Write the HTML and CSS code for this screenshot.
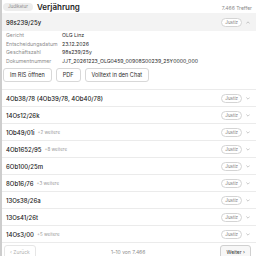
FILE: index.html
```html
<!DOCTYPE html>
<html lang="de">
<head>
<meta charset="utf-8">
<link rel="stylesheet" href="styles.css">
</head>
<body>
<div class="panel">
  <div class="topbar">
    <span class="tag">Judikatur</span>
    <span class="heading">Verjährung</span>
    <span class="count">7.466 Treffer</span>
  </div>

  <div class="item open">
    <div class="row head">
      <span class="title">98s239/25y</span>
      <span class="pill">Justiz</span>
      <svg class="chev" viewBox="0 0 6 4"><polyline points="0.5,3.5 3,1 5.5,3.5"/></svg>
    </div>
    <div class="details">
      <span class="lbl">Gericht</span><span class="val">OLG Linz</span>
      <span class="lbl">Entscheidungsdatum</span><span class="val">23.12.2026</span>
      <span class="lbl">Geschäftszahl</span><span class="val">98s239/25y</span>
      <span class="lbl">Dokumentnummer</span><span class="val">JJT_20261223_OLG0459_00908S00239_25Y0000_000</span>
    </div>
    <div class="actions">
      <span class="btn">Im RIS öffnen</span>
      <span class="btn">PDF</span>
      <span class="btn">Volltext in den Chat</span>
    </div>
  </div>

  <div class="row"><span class="title">4Ob38/78 (4Ob39/78, 4Ob40/78)</span><span class="pill">Justiz</span><svg class="chev" viewBox="0 0 6 4"><polyline points="0.5,0.5 3,3 5.5,0.5"/></svg></div>
  <div class="row"><span class="title">14Os12/26k</span><span class="pill">Justiz</span><svg class="chev" viewBox="0 0 6 4"><polyline points="0.5,0.5 3,3 5.5,0.5"/></svg></div>
  <div class="row"><span class="title">1Ob49/01i</span><span class="more">+2 weitere</span><span class="pill">Justiz</span><svg class="chev" viewBox="0 0 6 4"><polyline points="0.5,0.5 3,3 5.5,0.5"/></svg></div>
  <div class="row"><span class="title">4Ob1652/95</span><span class="more">+8 weitere</span><span class="pill">Justiz</span><svg class="chev" viewBox="0 0 6 4"><polyline points="0.5,0.5 3,3 5.5,0.5"/></svg></div>
  <div class="row"><span class="title">6Ob100/25m</span><span class="pill">Justiz</span><svg class="chev" viewBox="0 0 6 4"><polyline points="0.5,0.5 3,3 5.5,0.5"/></svg></div>
  <div class="row"><span class="title">8Ob16/76</span><span class="more">+3 weitere</span><span class="pill">Justiz</span><svg class="chev" viewBox="0 0 6 4"><polyline points="0.5,0.5 3,3 5.5,0.5"/></svg></div>
  <div class="row"><span class="title">13Os38/26a</span><span class="pill">Justiz</span><svg class="chev" viewBox="0 0 6 4"><polyline points="0.5,0.5 3,3 5.5,0.5"/></svg></div>
  <div class="row"><span class="title">13Os41/26t</span><span class="pill">Justiz</span><svg class="chev" viewBox="0 0 6 4"><polyline points="0.5,0.5 3,3 5.5,0.5"/></svg></div>
  <div class="row"><span class="title">14Os3/00</span><span class="more">+5 weitere</span><span class="pill">Justiz</span><svg class="chev" viewBox="0 0 6 4"><polyline points="0.5,0.5 3,3 5.5,0.5"/></svg></div>

  <div class="pager">
    <span class="pbtn disabled">‹ Zurück</span>
    <span class="pinfo">1–10 von 7.466</span>
    <span class="pbtn">Weiter ›</span>
  </div>
</div>
</body>
</html>
```

FILE: styles.css
```css
html, body {
  margin: 0;
  padding: 0;
  background: #ffffff;
}
body {
  font-family: "Inter", "Liberation Sans", sans-serif;
  color: #222;
  width: 256px;
  height: 256px;
  overflow: hidden;
}
.panel {
  border-left: 2px solid #cdcdcd;
  min-height: 256px;
  box-sizing: border-box;
}
.topbar {
  display: flex;
  align-items: center;
  height: 13px;
  padding: 0 4px 0 1px;
}
.tag {
  font-size: 4.5px;
  color: #8a8a8a;
  background: #ededed;
  border-radius: 4px;
  height: 8px;
  line-height: 8px;
  padding: 0 5px;
  margin-right: 4px;
}
.heading {
  font-size: 8px;
  font-weight: 600;
  color: #1e1e1e;
  flex: 1;
}
.count {
  font-size: 5px;
  color: #8a8a8a;
  margin-top: 2px;
}
.row {
  display: flex;
  align-items: center;
  height: 16px;
  padding: 0 6px 0 4px;
  border-bottom: 1px solid #ebebeb;
}
.row.head {
  background: #f3f3f3;
  border-bottom: none;
  height: 18px;
}
.title {
  font-size: 6px;
  font-weight: 500;
  color: #222;
}
.more {
  font-size: 4.5px;
  color: #9a9a9a;
  margin-left: 3px;
}
.pill {
  margin-left: auto;
  font-size: 4.5px;
  color: #777;
  background: #fff;
  border: 1px solid #d4d4d4;
  border-radius: 5px;
  height: 7px;
  line-height: 7px;
  padding: 0 3px;
}
.chev {
  width: 4px;
  height: 3px;
  margin-left: 4px;
  fill: none;
  stroke: #999;
  stroke-width: 0.8;
}
.item.open {
  border-bottom: 1px solid #ebebeb;
}
.details {
  display: grid;
  grid-template-columns: 56px 1fr;
  padding: 0 4px;
  line-height: 8.5px;
  font-size: 5.2px;
}
.lbl {
  color: #8d8d8d;
}
.val {
  color: #2a2a2a;
  white-space: nowrap;
}
.actions {
  display: flex;
  gap: 4px;
  padding: 3px 1px 7px;
}
.btn {
  font-size: 5.5px;
  color: #2a2a2a;
  border: 1px solid #d8d8d8;
  border-radius: 3px;
  height: 12px;
  line-height: 12px;
  padding: 0 6px;
  background: #fff;
}
.pager {
  display: flex;
  align-items: center;
  justify-content: space-between;
  padding: 2px 5px 0 2px;
}
.pbtn {
  font-size: 5px;
  color: #333;
  border: 1px solid #d0d0d0;
  border-radius: 3px;
  height: 12px;
  line-height: 12px;
  padding: 0 5px;
  background: #f7f7f7;
}
.pbtn.disabled {
  color: #b0b0b0;
  border-color: #e6e6e6;
  background: #fff;
}
.pinfo {
  font-size: 5px;
  color: #8d8d8d;
}
```
